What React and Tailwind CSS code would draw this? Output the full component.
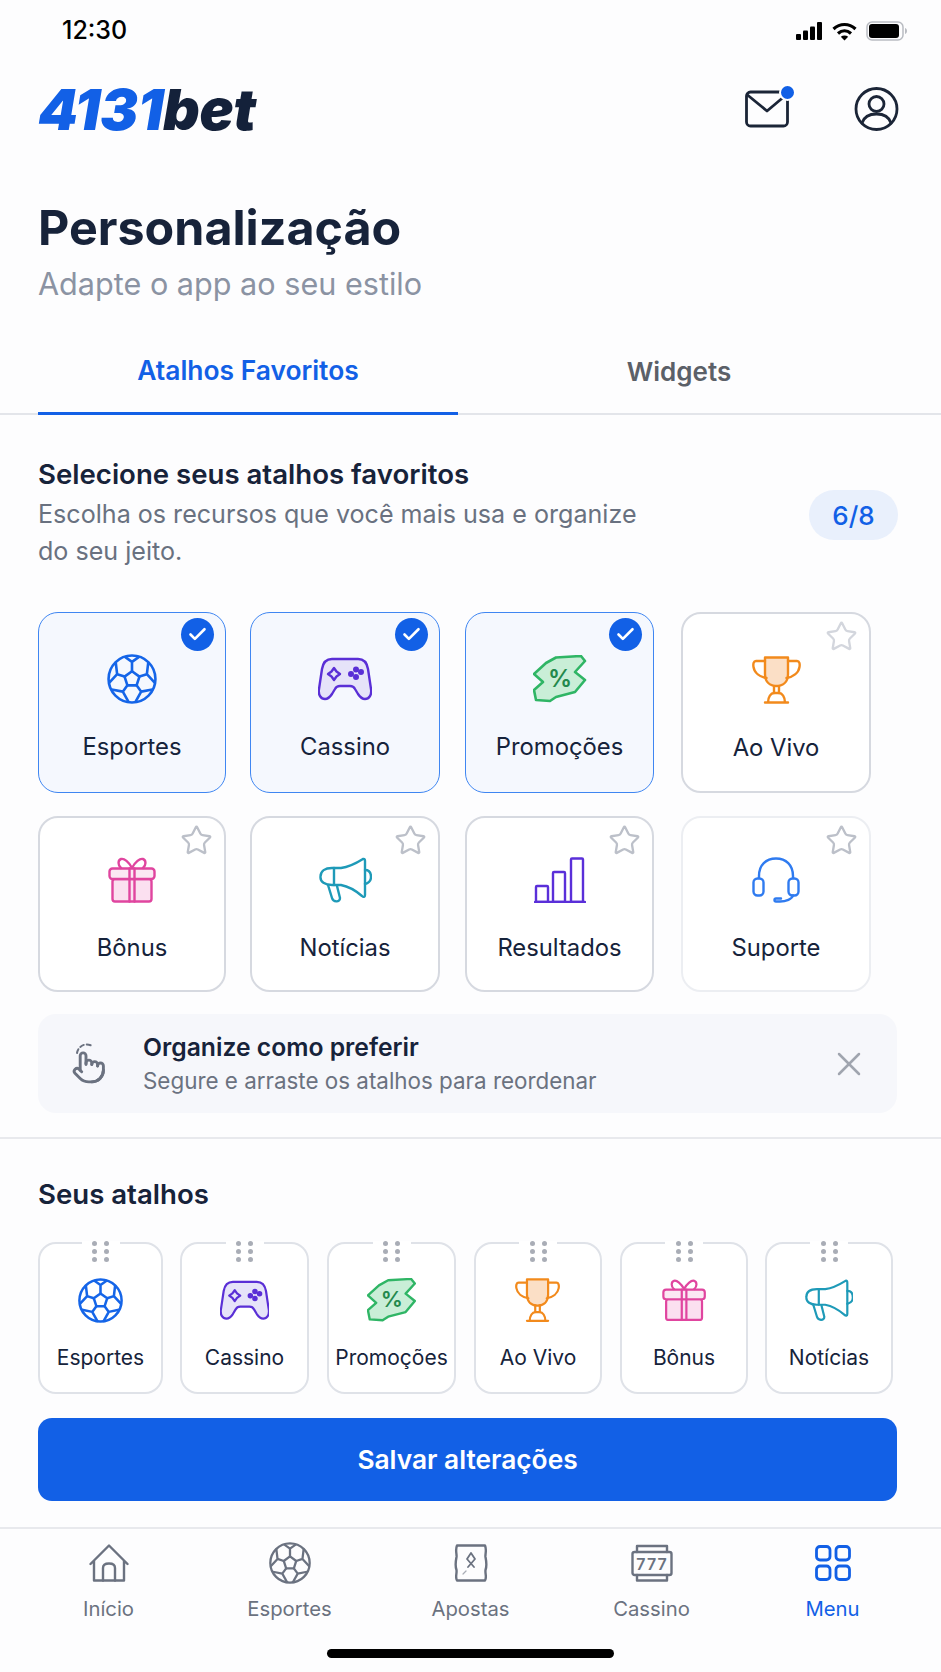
import React from 'react';
import { Check, Star, X } from 'lucide-react';

// soccer ball: pentagon in the middle, a spoke from each corner forking to the rim
const pt = (deg, r) => {
  const a = ((deg - 90) * Math.PI) / 180;
  return `${(24 + r * Math.cos(a)).toFixed(2)} ${(24 + r * Math.sin(a)).toFixed(2)}`;
};

const Ball = ({ w = 50, color = '#1565e8', sw = 2.5 }) => {
  const angles = [0, 72, 144, 216, 288];
  const penta = angles.map((a) => pt(a, 7.5)).join(' L');
  const lines = angles.map((a) => {
    const end = a === 0 ? 16.5 : 15;
    const spread = a === 0 ? 17 : 27;
    return `M${pt(a, 7.5)} L${pt(a, end)} L${pt(a - spread, 22)} M${pt(a, end)} L${pt(a + spread, 22)}`;
  });
  return (
    <svg width={w} height={w} viewBox="0 0 48 48" fill="none" stroke={color} strokeWidth={sw} strokeLinejoin="round" strokeLinecap="round">
      <circle cx="24" cy="24" r="22.5" />
      <path d={`M${penta}Z`} />
      {lines.map((d, i) => <path key={i} d={d} />)}
    </svg>
  );
};

const Gamepad = ({ s = 1 }) => (
  <svg width={54 * s} height={44 * s} viewBox="0 0 54 44" fill="none" stroke="#5a2fd6" strokeWidth="2.4" strokeLinejoin="round" strokeLinecap="round">
    <path d="M14 2H40C46 2 49 6 50 12L53 32C54 38 51 42 47 42C44 42 42 40 40 37L37 32C36 30 34 29 32 29H22C20 29 18 30 17 32L14 37C12 40 10 42 7 42C3 42 0 38 1 32L4 12C5 6 8 2 14 2Z" fill="#e6e3f9" />
    <path d="M16 11L18.500 14.500L22 17L18.500 19.500L16 23L13.500 19.500L10 17L13.500 14.500Z" />
    <circle cx="38" cy="12.500" r="1.800" fill="#5a2fd6" />
    <circle cx="33" cy="17" r="1.800" fill="#5a2fd6" />
    <circle cx="43" cy="15" r="1.800" fill="#5a2fd6" />
    <circle cx="38" cy="20" r="1.800" fill="#5a2fd6" />
  </svg>
);

const Ticket = ({ s = 1 }) => (
  <svg width={54 * s} height={48 * s} viewBox="0 0 54 48" fill="none">
    <path d="M23 2.500L48 1L52 6L42 17L52 25L42 37L23 42L17 46L3 45L1 35L10 27L1 19L13 8Z" fill="#c9eed7" stroke="#2fb565" strokeWidth="2.600" strokeLinejoin="round" />
    <text x="27" y="32" textAnchor="middle" fontSize="24" fontWeight="600" fontFamily="Inter, sans-serif" fill="#23894d">%</text>
  </svg>
);

const Trophy = ({ s = 1 }) => (
  <svg width={49 * s} height={48 * s} viewBox="0 0 49 48" fill="none" stroke="#f28a1c" strokeWidth="2.400" strokeLinejoin="round" strokeLinecap="round">
    <path d="M13 1.500H36V18C36 26 31 30 24.500 30C18 30 13 26 13 18Z" fill="#fbdfc6" />
    <path d="M13 5H4C1.500 5 1 8 1.500 11C2.500 17 8 21 14.500 22" />
    <path d="M36 5H45C47.500 5 48 8 47.500 11C46.500 17 41 21 34.500 22" />
    <path d="M22 30V37M27 30V37" />
    <path d="M13 46.500H36M16 46.500C16 41 19 37 22 37H27C30 37 33 41 33 46.500" />
  </svg>
);

const Gift = ({ s = 1 }) => (
  <svg width={48 * s} height={46 * s} viewBox="0 0 48 46" fill="none" stroke="#e0459f" strokeWidth="2.400" strokeLinejoin="round" strokeLinecap="round">
    <rect x="4.500" y="22" width="39" height="22.500" rx="2.500" fill="#fbe0f0" />
    <rect x="1.500" y="11.500" width="45" height="10.500" rx="3" fill="#fbe8f3" />
    <path d="M21.500 11.500V44.500M26.500 11.500V44.500" />
    <path d="M24 11C21 5 16 1 13 2C10 3 9.500 8 13 11M24 11C27 5 32 1 35 2C38 3 38.500 8 35 11" />
  </svg>
);

const Megaphone = ({ s = 1 }) => (
  <svg width={53 * s} height={46 * s} viewBox="0 0 53 46" fill="none" stroke="#1e9ab8" strokeWidth="2.400" strokeLinejoin="round" strokeLinecap="round">
    <path d="M13 11H22C30 10 36 7 44 2C45.500 1.500 46 2.500 46 4V38C46 40 44.500 40.500 43 39C36 33 30 29.500 22 28H13C6 28 1 25 1.500 19.500C1.500 14 6 11 13 11Z" />
    <path d="M15 11V28" />
    <path d="M9 28L13 41C14 45 21 46 21 41L18 29" />
    <path d="M46 13C50 13 52 16 52 20C52 24 50 26 46 27" />
  </svg>
);

const Bars = ({ s = 1 }) => (
  <svg width={52 * s} height={46 * s} viewBox="0 0 52 46" fill="none" stroke="#5a2fd9" strokeWidth="2.400" strokeLinejoin="round" strokeLinecap="round">
    <path d="M1 45H51" />
    <rect x="2" y="29" width="12" height="16" rx="1" />
    <rect x="19" y="15" width="12" height="30" rx="1" />
    <rect x="37" y="1.500" width="12" height="43.500" rx="1" />
  </svg>
);

const Headset = ({ s = 1 }) => (
  <svg width={48 * s} height={46 * s} viewBox="0 0 48 46" fill="none" stroke="#2f7bf0" strokeWidth="2.400" strokeLinejoin="round" strokeLinecap="round">
    <path d="M7 21V19C7 8 14 1.500 24 1.500C34 1.500 41 8 41 19V21" />
    <rect x="1.500" y="21.500" width="10" height="17" rx="4" />
    <rect x="36.500" y="21.500" width="10" height="17" rx="4" />
    <path d="M41 38.500C40 42 34 44.500 28 44.500H24C22 44.500 22 41.500 24 41.500H29" />
  </svg>
);

// hand with a dashed tap ring over the finger
const Hand = () => (
  <svg width="34" height="44" viewBox="0 0 34 44" fill="none" stroke="#6b7280" strokeWidth="2" strokeLinejoin="round" strokeLinecap="round">
    <path d="M5 11C6 4 14 0 20 4" strokeDasharray="4 3" />
    <g transform="translate(-0.500 8) scale(1.450)">
      <path d="M22 14a8 8 0 0 1-8 8" />
      <path d="M18 11v-1a2 2 0 0 0-2-2a2 2 0 0 0-2 2" />
      <path d="M14 10V9a2 2 0 0 0-2-2a2 2 0 0 0-2 2v1" />
      <path d="M10 9.500V4a2 2 0 0 0-2-2a2 2 0 0 0-2 2v10" />
      <path d="M18 11a2 2 0 1 1 4 0v3a8 8 0 0 1-8 8h-2c-2.800 0-4.500-.860-5.990-2.340l-3.600-3.600a2 2 0 0 1 2.830-2.820L7 15" />
    </g>
  </svg>
);

const Mail = () => (
  <svg width="44" height="38" viewBox="0 0 44 38" fill="none" stroke="#1b2537" strokeWidth="2.800" strokeLinejoin="round" strokeLinecap="round">
    <rect x="1.500" y="2" width="41" height="34" rx="4" />
    <path d="M2.500 5L22 21L41 5" />
  </svg>
);

const UserCircle = () => (
  <svg width="45" height="44" viewBox="0 0 45 44" fill="none" stroke="#1b2537" strokeWidth="2.800" strokeLinejoin="round" strokeLinecap="round">
    <circle cx="22.500" cy="22" r="20.500" />
    <circle cx="22.500" cy="17" r="7.500" />
    <path d="M8 36C10 30 15 27 22.500 27C30 27 35 30 37 36" />
  </svg>
);

const NavHome = () => (
  <svg width="40" height="38" viewBox="0 0 40 38" fill="none" stroke="#6b7280" strokeWidth="2.400" strokeLinejoin="round" strokeLinecap="round">
    <path d="M1.500 20L20 1.500L38.500 20M5 17V36.500H35V17" />
    <path d="M14 36.500V24C14 21 16.500 19.500 20 19.500C23.500 19.500 26 21 26 24V36.500" />
  </svg>
);

const NavTicket = () => (
  <svg width="34" height="38" viewBox="0 0 34 38" fill="none" stroke="#6b7280" strokeWidth="2.400" strokeLinejoin="round" strokeLinecap="round">
    <path d="M3 1.500H31C33 6 31 10 31.500 13C32.500 18 33 22 31.500 26C31 30 33 33 31 36.500H3C1 33 3 30 2.500 26C1 22 1.500 18 2.500 13C3 10 1 6 3 1.500Z" />
    <path d="M17 9L13 15L20 23M17 9L21 15L14 23" strokeWidth="1.800" />
    <path d="M9 30L12 27" strokeWidth="1.200" stroke="#a9adb6" />
  </svg>
);

const NavSlot = () => (
  <svg width="42" height="38" viewBox="0 0 42 38" fill="none" stroke="#6b7280" strokeWidth="2.400" strokeLinejoin="round" strokeLinecap="round">
    <path d="M6 8V2H36V8" />
    <rect x="1.500" y="8" width="39" height="23" rx="2" />
    <path d="M6 31V36.500H36V31" />
    <text x="21" y="26" textAnchor="middle" fontSize="16" fontWeight="600" fontFamily="Inter, sans-serif" fill="#6b7280" stroke="none" letterSpacing="1">777</text>
  </svg>
);

const NavGrid = () => (
  <svg width="36" height="36" viewBox="0 0 36 36" fill="none" stroke="#1260e6" strokeWidth="2.800">
    <rect x="1.500" y="1.500" width="13.500" height="13.500" rx="3.500" />
    <rect x="21" y="1.500" width="13.500" height="13.500" rx="3.500" />
    <rect x="1.500" y="21" width="13.500" height="13.500" rx="3.500" />
    <rect x="21" y="21" width="13.500" height="13.500" rx="3.500" />
  </svg>
);

const StatusIcons = () => (
  <div className="flex items-center gap-[9px]">
    <svg width="27" height="18" viewBox="0 0 27 18" fill="#000">
      <rect x="0" y="12" width="5" height="6" rx="1" />
      <rect x="7" y="8.500" width="5" height="9.500" rx="1" />
      <rect x="14" y="4.500" width="5" height="13.500" rx="1" />
      <rect x="21" y="0" width="5" height="18" rx="1" />
    </svg>
    <svg width="25" height="19" viewBox="0 0 25 19" fill="none" stroke="#000" strokeWidth="3.200">
      <path d="M1.500 7C8 1 17 1 23.500 7" />
      <path d="M6 11.500C10 8 15 8 19 11.500" />
      <path d="M12.500 18.500L8.800 14.700C11 13 14 13 16.200 14.700Z" fill="#000" stroke="none" />
    </svg>
    <svg width="41" height="20" viewBox="0 0 41 20" fill="none">
      <rect x="1" y="1" width="36" height="18" rx="5" stroke="#b9bcc2" strokeWidth="1.500" />
      <rect x="3" y="3" width="30" height="14" rx="3" fill="#000" />
      <path d="M39 7V13C40.500 12.500 41 11 41 10C41 9 40.500 7.500 39 7Z" fill="#b9bcc2" />
    </svg>
  </div>
);

const Card = ({ label, icon, selected, cls, first, last }) => (
  <div className={`relative flex flex-col items-center rounded-[20px] ${first ? 'h-[181px] pt-[41px]' : 'h-[176px] pt-[37px]'} ${cls} ${selected ? 'border-[1.5px] border-[#3f86f2] bg-[#f5f8fe]' : last ? 'border-2 border-[#eceef2] bg-white' : 'border-2 border-[#d6d9e0] bg-white'}`}>
    {selected ? (
      <div className="absolute top-[5px] right-[11px] flex h-[33px] w-[33px] items-center justify-center rounded-full bg-[#1260e6]">
        <Check size={21} color="#fff" strokeWidth={3} />
      </div>
    ) : (
      <Star size={33} className="absolute top-[6px] right-[11px]" color={first ? '#d3d6dd' : '#bcc0c9'} strokeWidth={1.700} />
    )}
    <div className="flex h-[50px] items-center justify-center">{icon}</div>
    <span className="mt-[28px] text-[23.800px] leading-[30px] text-[#16233b]">{label}</span>
  </div>
);

const MiniCard = ({ label, icon, cls }) => (
  <div className={`relative flex h-[152px] flex-col items-center rounded-[18px] border-2 border-[#dfe2e8] bg-white pt-[34px] ${cls}`}>
    <div className="absolute -top-[3px] left-1/2 grid w-[38px] -translate-x-1/2 grid-cols-2 justify-items-center gap-y-[3px] bg-white px-[7px] pb-1">
      {[0, 1, 2, 3, 4, 5].map((i) => <span key={i} className="h-[5px] w-[5px] rounded-full bg-[#a9adb6]" />)}
    </div>
    <div className="flex h-[44px] items-center justify-center">{icon}</div>
    <span className="mt-[22px] text-[21px] leading-[28px] text-[#16233b]">{label}</span>
  </div>
);

const NavItem = ({ icon, label, active }) => (
  <div className="flex flex-col items-center">
    <div className="flex h-[40px] items-center justify-center">{icon}</div>
    <span className={`mt-[13px] text-[20.300px] leading-[26px] ${active ? 'text-[#1260e6]' : 'text-[#6b7280]'}`}>{label}</span>
  </div>
);

export default function App() {
  return (
    <div className="flex h-[1672px] w-[941px] flex-col overflow-hidden bg-[#fdfdfe] font-[Inter,sans-serif]">
      {/* status bar */}
      <div className="flex h-[62px] items-center justify-between pr-[34px] pl-[62px]">
        <span className="text-[25px] font-medium text-black">12:30</span>
        <StatusIcons />
      </div>

      {/* header */}
      <div className="flex h-[94px] items-center justify-between pr-[42px] pl-[38px]">
        <div className="text-[57px] leading-none font-black tracking-[-0.007em] italic">
          <span className="text-[#1260e6]">4131</span>
          <span className="text-[#14213a]">bet</span>
        </div>
        <div className="flex items-center gap-[65px]">
          <div className="relative">
            <Mail />
            <span className="absolute -top-[6px] -right-[7px] h-[17px] w-[17px] rounded-full border-2 border-white bg-[#1260e6]" />
          </div>
          <UserCircle />
        </div>
      </div>

      {/* title */}
      <div className="px-[38px] pt-[44px]">
        <h1 className="text-[48.400px] leading-[56px] font-bold text-[#17233a]">Personalização</h1>
        <p className="mt-[8px] text-[30.600px] leading-[40px] text-[#8b93a3]">Adapte o app ao seu estilo</p>
      </div>

      {/* tabs */}
      <div className="mt-[26px] flex h-[85px] border-b-2 border-[#e3e5ea] pr-[41px] pl-[38px]">
        <div className="-mb-[2px] flex w-[420px] items-center justify-center border-b-[3px] border-[#1260e6] text-[26.400px] font-semibold text-[#1260e6]">Atalhos Favoritos</div>
        <div className="flex flex-1 items-center justify-center text-[26px] font-semibold text-[#5b6068]">Widgets</div>
      </div>

      {/* section heading */}
      <div className="mt-[41px] flex items-start justify-between pr-[43px] pl-[38px]">
        <div>
          <h2 className="text-[27.600px] leading-[36px] font-semibold text-[#17233a]">Selecione seus atalhos favoritos</h2>
          <p className="mt-[4px] max-w-[620px] text-[25.100px] leading-[37px] text-[#697180]">Escolha os recursos que você mais usa e organize do seu jeito.</p>
        </div>
        <div className="mt-[34px] flex h-[50px] w-[89px] items-center justify-center rounded-full bg-[#e9f0fc] text-[26px] font-medium text-[#1260e6]">6/8</div>
      </div>

      {/* shortcut grid */}
      <div className="mt-[42px] flex px-[38px]">
        <Card first selected label="Esportes" icon={<Ball />} cls="w-[188px]" />
        <Card first selected label="Cassino" icon={<Gamepad />} cls="ml-[24px] w-[190px]" />
        <Card first selected label="Promoções" icon={<Ticket />} cls="ml-[25px] w-[189px]" />
        <Card first label="Ao Vivo" icon={<Trophy />} cls="ml-[27px] w-[190px]" />
      </div>
      <div className="mt-[23px] flex px-[38px]">
        <Card label="Bônus" icon={<Gift />} cls="w-[188px]" />
        <Card label="Notícias" icon={<Megaphone />} cls="ml-[24px] w-[190px]" />
        <Card label="Resultados" icon={<Bars />} cls="ml-[25px] w-[189px]" />
        <Card last label="Suporte" icon={<Headset />} cls="ml-[27px] w-[190px]" />
      </div>

      {/* tip */}
      <div className="mx-[38px] mt-[22px] flex h-[99px] w-[859px] items-center rounded-[18px] bg-[#f6f7fb] pr-[28px] pl-[34px]">
        <Hand />
        <div className="ml-[37px] flex-1">
          <div className="text-[24.700px] leading-[34px] font-semibold text-[#17233a]">Organize como preferir</div>
          <div className="text-[22.400px] leading-[34px] text-[#6b7280]">Segure e arraste os atalhos para reordenar</div>
        </div>
        <X size={40} color="#a0a5af" strokeWidth={1.500} />
      </div>

      <div className="mt-[24px] h-[2px] bg-[#e8e9ed]" />

      {/* selected shortcuts */}
      <h2 className="mt-[37px] pl-[38px] text-[27.600px] leading-[36px] font-semibold text-[#17233a]">Seus atalhos</h2>
      <div className="mt-[30px] flex pl-[38px]">
        <MiniCard label="Esportes" icon={<Ball w={45} sw={2.700} />} cls="w-[125px]" />
        <MiniCard label="Cassino" icon={<Gamepad s={0.92} />} cls="ml-[17px] w-[129px]" />
        <MiniCard label="Promoções" icon={<Ticket s={0.92} />} cls="ml-[18px] w-[129px]" />
        <MiniCard label="Ao Vivo" icon={<Trophy s={0.92} />} cls="ml-[18px] w-[128px]" />
        <MiniCard label="Bônus" icon={<Gift s={0.92} />} cls="ml-[18px] w-[128px]" />
        <MiniCard label="Notícias" icon={<Megaphone s={0.92} />} cls="ml-[17px] w-[128px]" />
      </div>

      <button className="mx-[38px] mt-[24px] h-[83px] w-[859px] shrink-0 rounded-[14px] bg-[#1260e6] pt-[1px] text-[26.300px] font-semibold text-white">Salvar alterações</button>

      {/* bottom nav */}
      <div className="mt-[26px] grid grid-cols-5 border-t-2 border-[#e8e9ed] px-[18px] pt-[14px]">
        <NavItem icon={<NavHome />} label="Início" />
        <NavItem icon={<Ball w={42} color="#6b7280" sw={2.600} />} label="Esportes" />
        <NavItem icon={<NavTicket />} label="Apostas" />
        <NavItem icon={<NavSlot />} label="Cassino" />
        <NavItem active icon={<NavGrid />} label="Menu" />
      </div>
      <div className="mx-auto mt-[27px] h-[9px] w-[287px] rounded-full bg-black" />
    </div>
  );
}
